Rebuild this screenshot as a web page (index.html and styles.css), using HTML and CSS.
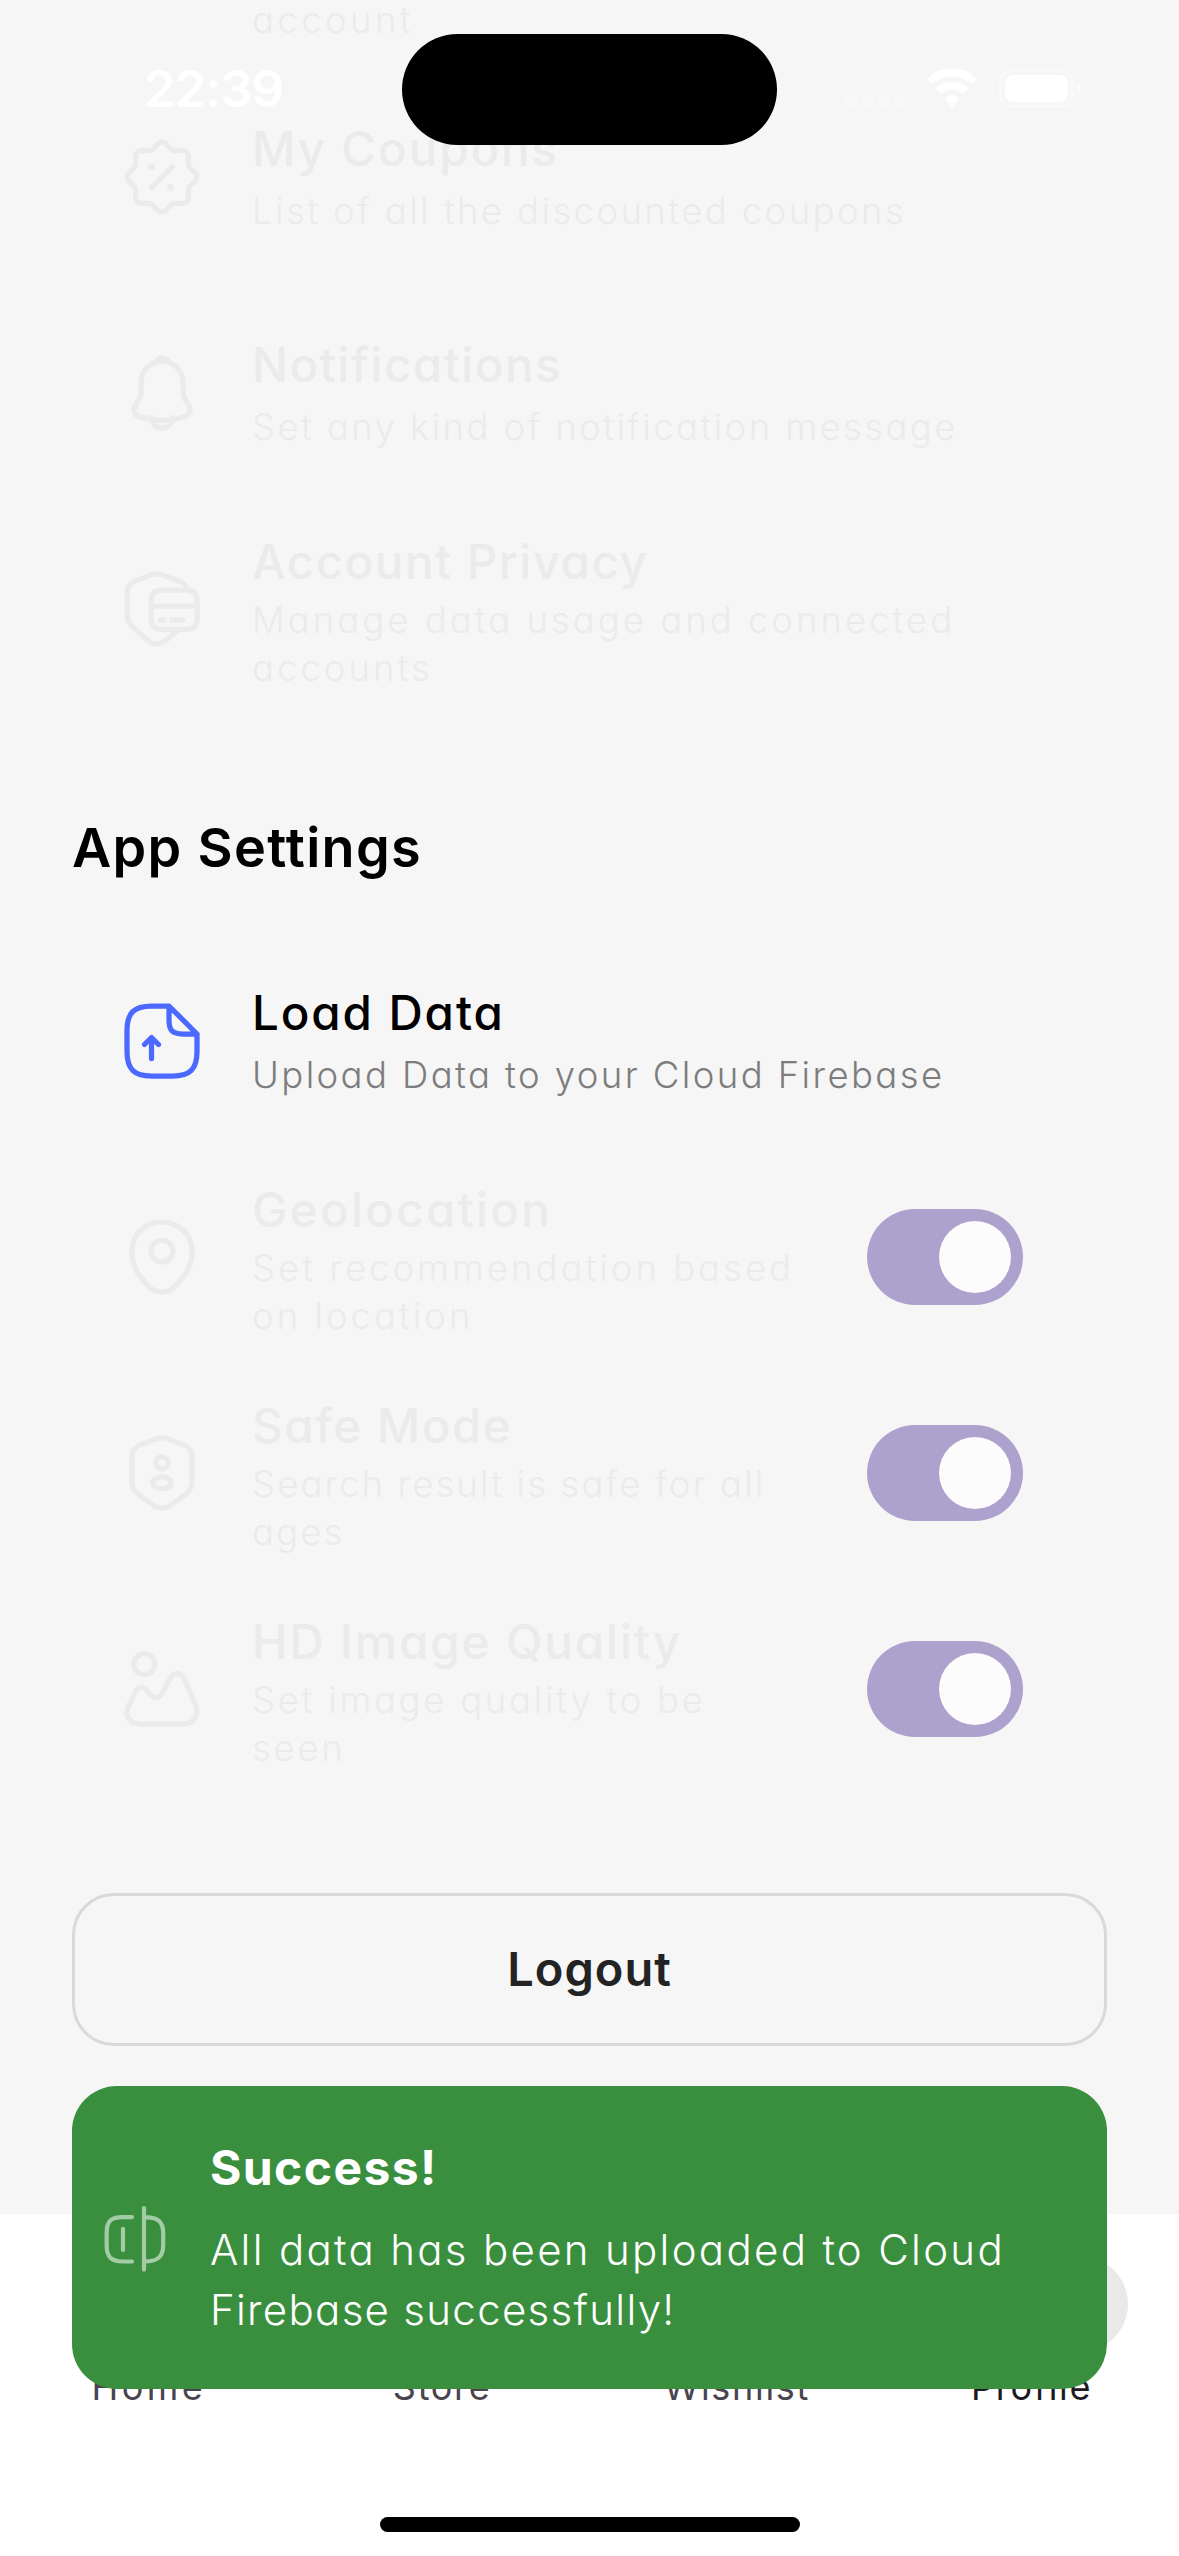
FILE: index.html
```html
<!DOCTYPE html>
<html lang="en">
<head>
<meta charset="utf-8">
<title>Profile</title>
<link rel="stylesheet" href="styles.css">
</head>
<body>
<div class="screen">
  <main class="content">
    <div class="row row-clipped"><p class="sub sub-xwide">account</p></div>

    <div class="row faded">
      <svg class="icon" viewBox="0 0 24 24"><path d="M3.99 14.66L2.47 13.14C1.85 12.52 1.85 11.5 2.47 10.88L3.99 9.36C4.25 9.1 4.46 8.59 4.46 8.23V6.08C4.46 5.2 5.18 4.48 6.06 4.48H8.21C8.57 4.48 9.08 4.27 9.34 4.01L10.86 2.49C11.48 1.87 12.5 1.87 13.12 2.49L14.64 4.01C14.9 4.27 15.41 4.48 15.77 4.48H17.92C18.8 4.48 19.52 5.2 19.52 6.08V8.23C19.52 8.59 19.73 9.1 19.99 9.36L21.51 10.88C22.13 11.5 22.13 12.52 21.51 13.14L19.99 14.66C19.73 14.92 19.52 15.43 19.52 15.79V17.94C19.52 18.82 18.8 19.54 17.92 19.54H15.77C15.41 19.54 14.9 19.75 14.64 20.01L13.12 21.53C12.5 22.15 11.48 22.15 10.86 21.53L9.34 20.01C9.08 19.75 8.57 19.54 8.21 19.54H6.06C5.18 19.54 4.46 18.82 4.46 17.94V15.79C4.46 15.42 4.25 14.91 3.99 14.66ZM9 15L15 9"/><path stroke-width="2" d="M14.5 14.9H14.51M9 9.1H9.01"/></svg>
      <div class="text">
        <h3 class="title">My Coupons</h3>
        <p class="sub">List of all the discounted coupons</p>
      </div>
    </div>

    <div class="row faded">
      <svg class="icon" viewBox="0 0 24 24"><path d="M12.02 2.91C8.71 2.91 6.02 5.6 6.02 8.91V11.8C6.02 12.41 5.76 13.34 5.45 13.86L4.3 15.77C3.59 16.95 4.08 18.26 5.38 18.7C9.69 20.14 14.34 20.14 18.65 18.7C19.86 18.3 20.39 16.87 19.73 15.77L18.58 13.86C18.28 13.34 18.02 12.41 18.02 11.8V8.91C18.02 5.61 15.32 2.91 12.02 2.91Z"/><path d="M13.87 3.2C12.65 2.85 11.4 2.84 10.17 3.2C10.46 2.46 11.18 1.94 12.02 1.94C12.86 1.94 13.58 2.46 13.87 3.2ZM15.02 19.06C15.02 20.71 13.67 22.06 12.02 22.06C11.2 22.06 10.44 21.72 9.9 21.18C9.36 20.64 9.02 19.88 9.02 19.06"/></svg>
      <div class="text">
        <h3 class="title title-narrow">Notifications</h3>
        <p class="sub">Set any kind of notification message</p>
      </div>
    </div>

    <div class="row faded two-line">
      <svg class="icon" viewBox="0 0 24 24"><path d="M18.9 5.6C18.5 4.9 18 4.5 17.3 4.2L12.2 2.3C11.1 1.9 9.9 1.9 8.8 2.3L4.4 4C2.9 4.6 2 5.9 2 7.5V13.3C2 15 2.8 16.6 4.1 17.6L8 21C9.5 22.3 11.5 22.3 13 21L16.6 18"/><path d="M12 6.6H19C21 6.6 22.05 7.6 22.05 9.6V14.8C22.05 16.8 21 17.8 19 17.8H12C10 17.8 8.9 16.8 8.9 14.8V9.6C8.9 7.6 10 6.6 12 6.6ZM8.9 11.2H22M11.4 15.2H12.6M14.8 15.2H17.9"/></svg>
      <div class="text">
        <h3 class="title title-narrow">Account Privacy</h3>
        <p class="sub sub-wide">Manage data usage and connected<br>accounts</p>
      </div>
    </div>

    <h2 class="section">App Settings</h2>

    <div class="row">
      <svg class="icon icon-blue" viewBox="0 0 24 24"><path d="M22 10V15C22 20 20 22 15 22H9C4 22 2 20 2 15V9C2 4 4 2 9 2H14M22 10H18C15 10 14 9 14 6V2L22 10ZM9 17V11L7 13M9 11L11 13"/></svg>
      <div class="text">
        <h3 class="title">Load Data</h3>
        <p class="sub">Upload Data to your Cloud Firebase</p>
      </div>
    </div>

    <div class="row faded two-line">
      <svg class="icon" viewBox="0 0 24 24"><path d="M12 13.43a3.12 3.12 0 1 0 0-6.24 3.12 3.12 0 0 0 0 6.24ZM3.62 8.49c1.97-8.66 14.8-8.65 16.76.01 1.15 5.08-2.01 9.38-4.78 12.04a5.193 5.193 0 0 1-7.21 0c-2.76-2.66-5.92-6.97-4.77-12.05Z"/></svg>
      <div class="text">
        <h3 class="title title-wide">Geolocation</h3>
        <p class="sub sub-wide">Set recommendation based<br>on location</p>
      </div>
      <span class="switch"><span class="knob"></span></span>
    </div>

    <div class="row faded two-line">
      <svg class="icon" viewBox="0 0 24 24"><path d="M10.49 2.23L5.5 4.11C4.35 4.54 3.41 5.9 3.41 7.12V14.55C3.41 15.73 4.19 17.28 5.14 17.99L9.44 21.2C10.85 22.26 13.17 22.26 14.58 21.2L18.88 17.99C19.83 17.28 20.61 15.73 20.61 14.55V7.12C20.61 5.89 19.67 4.53 18.52 4.1L13.53 2.23C12.68 1.92 11.32 1.92 10.49 2.23Z"/><circle cx="12" cy="9.1" r="1.75"/><ellipse cx="12" cy="14.8" rx="2.65" ry="1.7"/></svg>
      <div class="text">
        <h3 class="title title-narrow">Safe Mode</h3>
        <p class="sub sub-narrow">Search result is safe for all<br>ages</p>
      </div>
      <span class="switch"><span class="knob"></span></span>
    </div>

    <div class="row faded two-line">
      <svg class="icon" viewBox="0 0 24 24"><circle cx="7" cy="4.9" r="3"/><path d="M2.4 16.9L4.4 12.8C5.2 11.2 6.8 11.1 7.8 12.5L8.4 13.4C9.6 15 11.2 14.9 12.1 13L14.2 9.2C15.4 7 17.5 7.1 18.5 9.4L21.5 16.4C22.8 19.3 21.1 22 18.1 22H5.9C2.7 22 1.1 19.6 2.4 16.9Z"/></svg>
      <div class="text">
        <h3 class="title">HD Image Quality</h3>
        <p class="sub sub-mid">Set image quality to be<br>seen</p>
      </div>
      <span class="switch"><span class="knob"></span></span>
    </div>

    <div class="logout">Logout</div>
  </main>

  <nav class="nav">
    <div class="tab"><span class="pill"></span><span class="tab-wide">Home</span></div>
    <div class="tab"><span class="pill"></span><span>Store</span></div>
    <div class="tab"><span class="pill"></span><span>Wishlist</span></div>
    <div class="tab active"><span class="pill"></span><span>Profile</span></div>
  </nav>

  <header class="status">
    <span class="time">22:39</span>
    <div class="island"></div>
    <svg class="indicators" viewBox="0 0 240 42">
      <g fill="#fff" fill-opacity=".4"><circle cx="5.5" cy="34" r="5.5"/><circle cx="21.5" cy="34" r="5.5"/><circle cx="37.5" cy="34" r="5.5"/><circle cx="53.5" cy="34" r="5.5"/></g>
      <g fill="none" stroke="#fff" stroke-width="8"><path d="M83.500 13.600A32.500 32.500 0 0 1 128.500 13.600"/><path d="M92.500 23.100A20 20 0 0 1 119.500 23.100"/></g>
      <path fill="#fff" d="M98.300 30.500Q106 23.500 113.700 30.500L106 39Z"/>
      <rect x="154.500" y="2.500" width="72" height="36" rx="12" fill="none" stroke="#fff" stroke-width="3" stroke-opacity=".4"/>
      <path d="M231 14Q235.500 16 235.500 20.500T231 27Z" fill="#fff" fill-opacity=".5"/>
      <rect x="159" y="7" width="63" height="27" rx="8" fill="#fff"/>
    </svg>
  </header>

  <div class="snackbar">
    <svg class="snack-icon" viewBox="0 0 24 24"><path d="M11 4.700H8C4 4.700 2.550 6 2.550 10V14C2.550 18 4 19.500 8 19.500H11M15.050 4.700C19.500 4.700 21.400 6 21.400 10V14C21.400 18 19.500 19.500 15.050 19.500M15 1.700V22.200M8 8.600V15.700"/></svg>
    <div class="snack-text">
      <strong class="snack-title">Success!</strong>
      <p class="snack-body">All data has been uploaded to Cloud<br><span class="snack-tight">Firebase successfully!</span></p>
    </div>
  </div>

  <div class="home-bar"></div>
</div>
</body>
</html>
```
FILE: styles.css
```css
* {
  box-sizing: border-box;
  margin: 0;
  padding: 0;
}

body {
  background: #f6f6f6;
  font-family: Inter, "Open Sans", sans-serif;
  font-feature-settings: "cv11";
}

.screen {
  position: relative;
  display: flex;
  flex-direction: column;
  width: 1179px;
  height: 2556px;
  overflow: hidden;
  background: #f6f6f6;
}

.content {
  height: 2214px;
  padding: 0 72px;
  overflow: hidden;
}

.row {
  display: flex;
  align-items: center;
  height: 216px;
  padding: 0 84px 0 48px;
}

.row-clipped {
  align-items: flex-start;
  height: 69px;
  padding-left: 180px;
}

.row-clipped .sub {
  color: #ebebeb;
  line-height: 40px;
}

.icon {
  flex: none;
  width: 84px;
  height: 84px;
  margin-right: 48px;
  fill: none;
  stroke: #ebebeb;
  stroke-width: 1.5;
  stroke-linecap: round;
  stroke-linejoin: round;
}

.icon-blue {
  stroke: #4b68ff;
}

.text {
  display: flex;
  flex: 1;
  flex-direction: column;
  gap: 8px;
  white-space: nowrap;
}

.two-line .text {
  gap: 4px;
  padding-top: 5px;
}

.title {
  color: #000;
  font-size: 47.500px;
  font-weight: 460;
  line-height: 60px;
  letter-spacing: 1.900px;
}

.title-narrow {
  letter-spacing: 1.500px;
}

.title-wide {
  letter-spacing: 2.300px;
}

.sub {
  color: #7d7d7d;
  font-size: 36.500px;
  font-weight: 300;
  line-height: 48px;
  letter-spacing: 2.400px;
}

.sub-narrow {
  letter-spacing: 2.100px;
}

.sub-mid {
  letter-spacing: 2.700px;
}

.sub-wide {
  letter-spacing: 3px;
}

.sub-xwide {
  letter-spacing: 3.400px;
}

.faded .title,
.faded .sub {
  color: #ebebeb;
}

.section {
  height: 216px;
  padding-top: 95px;
  color: #000;
  font-size: 54px;
  font-weight: 600;
  line-height: 72px;
  letter-spacing: 1.300px;
}

.switch {
  display: flex;
  flex: none;
  align-items: center;
  justify-content: flex-end;
  width: 156px;
  height: 96px;
  padding-right: 12px;
  border-radius: 48px;
  background: #ada2cd;
}

.knob {
  width: 72px;
  height: 72px;
  border-radius: 50%;
  background: #fcfcfc;
}

.logout {
  height: 153px;
  margin-top: 96px;
  border: 3px solid #d9d9d9;
  border-radius: 42px;
  color: #232323;
  font-size: 47px;
  font-weight: 570;
  line-height: 145px;
  letter-spacing: 1px;
  text-align: center;
}

.nav {
  display: flex;
  height: 342px;
  padding-top: 42px;
  background: #fff;
}

.tab {
  display: flex;
  flex: 1;
  flex-direction: column;
  align-items: center;
  gap: 11px;
  color: #49454f;
  font-size: 36px;
  line-height: 48px;
  letter-spacing: 1.700px;
}

.tab-wide {
  padding-left: 3px;
  letter-spacing: 3.500px;
}

.pill {
  width: 192px;
  height: 96px;
  border-radius: 48px;
}

.active {
  color: #1c1b1f;
}

.active .pill {
  background: #e9e9e9;
}

.status {
  position: absolute;
  top: 33.500px;
  left: 0;
  display: flex;
  align-items: flex-start;
  width: 1179px;
  height: 112px;
}

.time {
  width: 258px;
  margin-left: 144px;
  padding-top: 22px;
  color: #fff;
  font-size: 51px;
  font-weight: 600;
  line-height: 66px;
  letter-spacing: -1.200px;
}

.island {
  width: 375px;
  height: 111px;
  border-radius: 56px;
  background: #000;
}

.indicators {
  width: 240px;
  height: 42px;
  margin: 34px 0 0 69px;
}

.snackbar {
  position: absolute;
  top: 2085.500px;
  left: 72px;
  display: flex;
  align-items: center;
  width: 1035px;
  height: 303px;
  padding-left: 27px;
  border-radius: 45px;
  background: #3a8f3e;
  color: #fff;
}

.snack-icon {
  width: 72px;
  height: 72px;
  margin: 3px 39px 0 0;
  fill: none;
  stroke: #a3cba5;
  stroke-width: 1.400;
  stroke-linecap: round;
  stroke-linejoin: round;
}

.snack-text {
  display: flex;
  flex-direction: column;
  gap: 22px;
  padding-top: 3px;
  white-space: nowrap;
}

.snack-title {
  font-size: 48px;
  font-weight: 700;
  line-height: 60px;
  letter-spacing: 1.400px;
}

.snack-body {
  font-size: 42px;
  font-weight: 270;
  line-height: 60px;
  letter-spacing: 2.300px;
}

.snack-tight {
  letter-spacing: 1.300px;
}

.home-bar {
  position: absolute;
  bottom: 24px;
  left: 380px;
  width: 420px;
  height: 15px;
  border-radius: 8px;
  background: #000;
}
```
